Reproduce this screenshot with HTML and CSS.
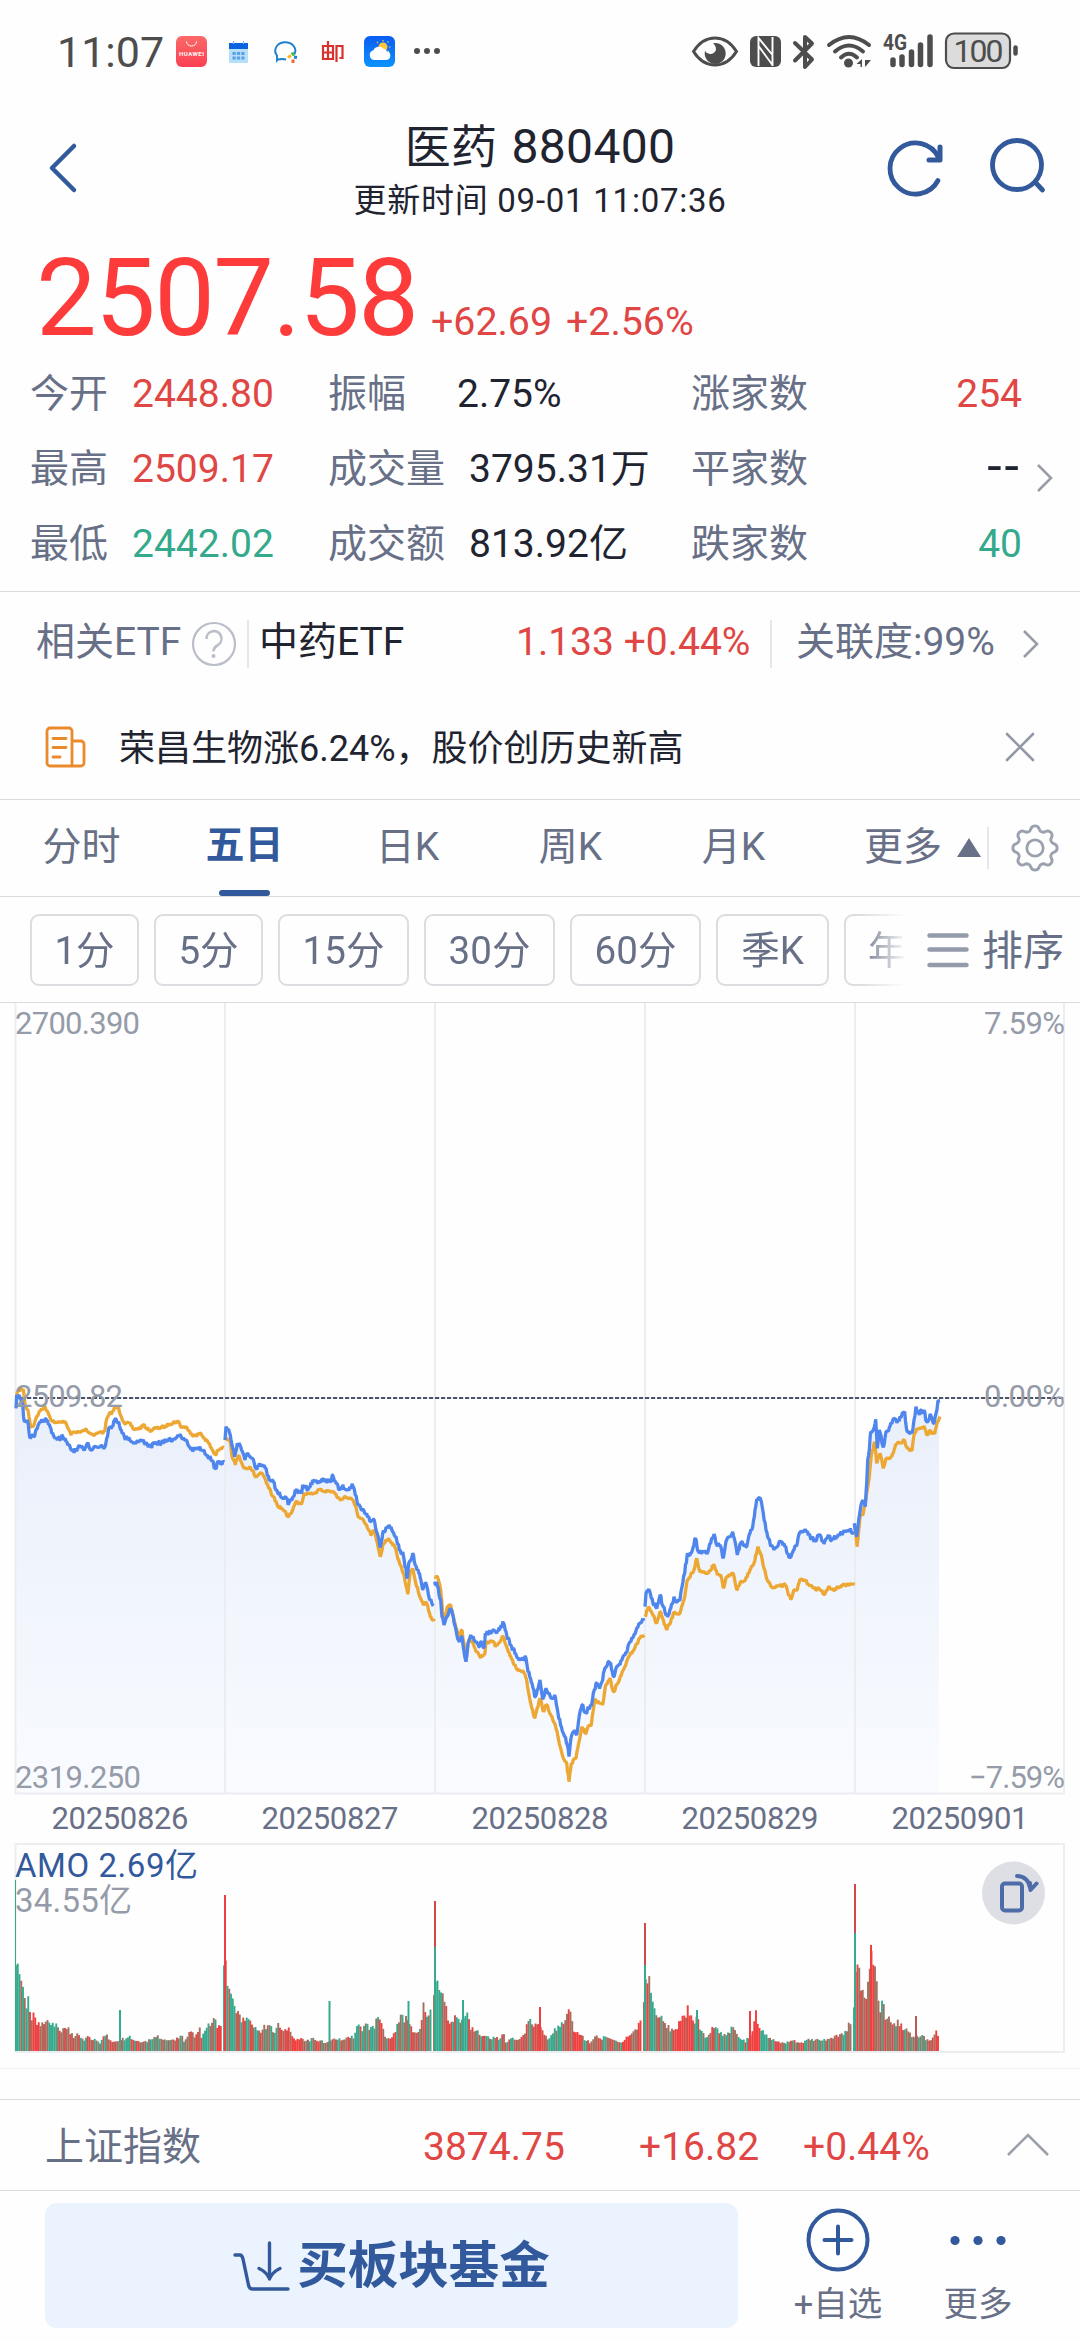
FILE: index.html
```html
<!DOCTYPE html>
<html lang="zh-CN">
<head>
<meta charset="utf-8">
<title>医药 880400</title>
<link rel="stylesheet" href="styles.css">
</head>
<body>
<div class="app">
  <div class="status">
    <span class="clock">11:07</span>
    <svg class="status-left" width="270" height="40" viewBox="172 32 270 40">
      <defs>
        <linearGradient id="hw" x1="0" y1="0" x2="0" y2="1"><stop offset="0" stop-color="#fb6a68"/><stop offset="1" stop-color="#fb3f52"/></linearGradient>
        <linearGradient id="sky" x1="0" y1="0" x2="0" y2="1"><stop offset="0" stop-color="#0a5cf5"/><stop offset="1" stop-color="#0b93ff"/></linearGradient>
      </defs>
      <rect x="176" y="36" width="31" height="31" rx="6" fill="url(#hw)"/>
      <path d="M186.500 41.500a5 4.500 0 0 0 10 0" fill="none" stroke="#fff" stroke-width="1"/>
      <text x="191.500" y="55.500" class="hw-text" textLength="25">HUAWEI</text>
      <rect x="229" y="43" width="19" height="20" rx="1" fill="#b5e0fb"/>
      <rect x="229" y="43" width="19" height="6" fill="#0b62e0"/>
      <path d="M233.500 41v3M243.500 41v3" stroke="#7fb6f5" stroke-width="1.200"/>
      <path d="M232.500 53.500h12M232.500 58h12" stroke="#5d9fe3" stroke-width="3" stroke-dasharray="3.200 1.200"/>
      <path d="M279.500 59.500l-1.500 2v-5a10 8.500 0 1 1 17.500-1.500M279 60.500q4-1 8 0" fill="none" stroke="#1d7fcd" stroke-width="1.900" transform="translate(-1 -1)"/>
      <path d="M288 57.500l3-2" stroke="#f6b51e" stroke-width="3"/><path d="M292 52.500l2 3" stroke="#45b649" stroke-width="3"/><path d="M294 57l3 .5" stroke="#1d7fcd" stroke-width="3"/><path d="M293 63v-3.500" stroke="#ea6a3a" stroke-width="3"/>
      <path d="M323 46h10v13h-10zM323 52.500h10M328 41v18M336.500 62v-16h6v12h-3" fill="none" stroke="#d8322f" stroke-width="2.200"/>
      <rect x="364" y="36" width="31" height="31" rx="6" fill="url(#sky)"/>
      <circle cx="383" cy="47" r="4.500" fill="#ffc736"/>
      <path d="M383 40v1.500M377 42l1 1M388.500 41.500l-1 1M390.500 47h-1.500M389 52l-1-1" stroke="#ffc736" stroke-width="1.200"/>
      <path d="M374 60a5 5 0 0 1-.5-9.800a6 6 0 0 1 10-1.500a4.500 4.500 0 0 1 3.500 2.500a4.500 4.500 0 0 1-.5 8.800z" fill="#fff"/>
      <circle cx="417" cy="51" r="3" fill="#4d4d4d"/><circle cx="427" cy="51" r="3" fill="#4d4d4d"/><circle cx="437" cy="51" r="3" fill="#4d4d4d"/>
    </svg>
    <svg class="status-right" width="330" height="40" viewBox="690 32 330 40" fill="none" stroke="#4d4d4d">
      <path d="M693.500 51.500Q702 38 715 38T736.500 51.500Q728 65 715 65T693.500 51.500Z" stroke-width="3"/>
      <path d="M715 43a10.500 10.500 0 1 1-10 8a6 6 0 0 0 11-1.500q0-4-3-6.300z" fill="#4d4d4d" stroke="none"/>
      <rect x="750" y="36" width="31" height="31" rx="6" fill="#4d4d4d" stroke="none"/>
      <path d="M758.500 66V38L772.500 55V66M758.500 46L772.500 65M772.500 37v17" stroke="#fff" stroke-width="1.900"/>
      <path d="M795 43l17 16.500-7 7.500V37l7 6.500-17 17" stroke-width="4" stroke-linecap="round" stroke-linejoin="round"/>
      <path d="M829 45q20-16 40 0M835 51.500q14-12 28 0M841 57.500q8-7.500 16 0" stroke-width="4" stroke-linecap="round"/>
      <circle cx="848.500" cy="63" r="4.500" fill="#4d4d4d" stroke="none"/>
      <path d="M862 59v8h-1.500v-3h-4zM865 67v-7h6l-5 6z" fill="#4d4d4d" stroke="none"/>
      <text x="883" y="50" class="net" textLength="24" lengthAdjust="spacingAndGlyphs">4G</text>
      <path d="M893 60v4.500M902 57v7.500M911.500 52v12.500M920.500 45v19.500M930 37v27.500" stroke-width="5.500" stroke-linecap="round"/>
      <rect x="946" y="33.500" width="64" height="34.500" rx="8" fill="#dcdcdc" stroke-width="2.200"/>
      <path d="M1015.500 47.500v6" stroke-width="4.500" stroke-linecap="round"/>
      <text x="978.500" y="61.500" class="batt" textLength="50">100</text>
    </svg>
  </div>

  <header class="head">
    <svg class="back" width="30" height="54" viewBox="0 0 30 54"><path d="M27 5L5 27L27 49" fill="none" stroke="#32599b" stroke-width="4.500" stroke-linecap="round" stroke-linejoin="round"/></svg>
    <div class="title">
      <h1><span class="zh">医药</span> 880400</h1>
      <p>更新时间 09-01 11:07:36</p>
    </div>
    <svg class="head-icons" width="164" height="64" viewBox="886 136 164 64" fill="none" stroke="#32599b" stroke-width="4.800">
      <path d="M938 180.500a25.500 25.500 0 1 1 .5-23" stroke-linecap="round"/>
      <path d="M940 147v13h-11" stroke-width="5" stroke-linecap="round" stroke-linejoin="round"/>
      <circle cx="1017" cy="165" r="24.500"/><path d="M1035 182l7.500 8" stroke-linecap="round"/>
    </svg>
  </header>

  <section class="quote">
    <strong>2507.58</strong><span class="chg">+62.69</span><span class="pct">+2.56%</span>
  </section>

  <section class="stats">
    <div class="grid">
      <span>今开</span><b class="up">2448.80</b><span>振幅</span><b>2.75%</b><span>涨家数</span><b class="up r">254</b>
      <span>最高</span><b class="up">2509.17</b><span>成交量</span><b class="v">3795.31万</b><span>平家数</span><b class="r dash">--</b>
      <span>最低</span><b class="down">2442.02</b><span>成交额</span><b class="v">813.92亿</b><span>跌家数</span><b class="down r">40</b>
    </div>
    <svg class="chev" width="18" height="30" viewBox="0 0 18 30"><path d="M2 2l13 13-13 13" fill="none" stroke="#999da6" stroke-width="2.600"/></svg>
  </section>

  <section class="etf">
    <span class="lbl">相关ETF</span>
    <svg class="help" width="46" height="46" viewBox="0 0 46 46"><circle cx="23" cy="23" r="21" fill="none" stroke="#b9bec8" stroke-width="2.200"/><path d="M15.500 18a7.500 7.500 0 1 1 11.500 6q-4.500 2.500-4.500 6.500" fill="none" stroke="#b9bec8" stroke-width="2.600"/><circle cx="22.500" cy="35" r="2" fill="#b9bec8"/></svg>
    <i class="sep"></i>
    <span class="name">中药ETF</span>
    <span class="val">1.133 +0.44%</span>
    <i class="sep"></i>
    <span class="rel">关联度:99%</span>
    <svg class="chev" width="18" height="30" viewBox="0 0 18 30"><path d="M2 2l13 13-13 13" fill="none" stroke="#999da6" stroke-width="2.600"/></svg>
  </section>

  <section class="news">
    <svg width="42" height="42" viewBox="0 0 42 42" fill="none" stroke="#ea8a2c" stroke-width="2.800" stroke-linecap="round" stroke-linejoin="round"><path d="M27 40H5a3 3 0 0 1-3-3V5a3 3 0 0 1 3-3h19a3 3 0 0 1 3 3zM27 15h9a3 3 0 0 1 3 3v19a3 3 0 0 1-3 3h-9M8 12.500h13M8 21.500h13M8 31h7"/></svg>
    <span>荣昌生物涨6.24%，股价创历史新高</span>
    <svg width="30" height="30" viewBox="0 0 30 30"><path d="M2 2l26 26M28 2L2 28" stroke="#9398a6" stroke-width="2.600" stroke-linecap="round"/></svg>
  </section>

  <nav class="tabs">
    <a>分时</a><a class="on">五日</a><a>日K</a><a>周K</a><a>月K</a>
    <span class="more">更多</span>
    <svg class="tri" width="24" height="20" viewBox="0 0 24 20"><path d="M12 0L24 19H0z" fill="#687087"/></svg>
    <i class="sep"></i>
    <svg class="gear" width="50" height="50" viewBox="-25 -25 50 50" fill="none" stroke="#9ba1af" stroke-width="2.800"><circle r="8.200"/><path transform="scale(1.030)" d="M18.500-4.100A4.300 4.300 0 0 1 18.500 4.100A4 4 0 0 0 16 10.200A4.300 4.300 0 0 1 10.200 16A4 4 0 0 0 4.100 18.500A4.300 4.300 0 0 1-4.100 18.500A4 4 0 0 0-10.200 16A4.300 4.300 0 0 1-16 10.200A4 4 0 0 0-18.500 4.100A4.300 4.300 0 0 1-18.500-4.100A4 4 0 0 0-16-10.200A4.300 4.300 0 0 1-10.200-16A4 4 0 0 0-4.100-18.500A4.300 4.300 0 0 1 4.100-18.500A4 4 0 0 0 10.200-16A4.300 4.300 0 0 1 16-10.200A4 4 0 0 0 18.500-4.100Z"/></svg>
  </nav>

  <div class="periods">
    <div class="pills">
      <span class="w1">1分</span><span class="w1">5分</span><span class="w2">15分</span><span class="w2">30分</span><span class="w2">60分</span><span class="w3">季K</span><span class="w4">年</span>
    </div>
    <svg width="42" height="36" viewBox="0 0 42 36"><path d="M2.500 3.500h37M2.500 17.500h37M2.500 33h37" stroke="#949bab" stroke-width="4.500" stroke-linecap="round"/></svg>
    <span class="sort">排序</span>
  </div>

  <section class="charts">
    <svg id="chart" width="1080" height="1065" viewBox="0 1003 1080 1065">
      <defs><linearGradient id="area" gradientUnits="userSpaceOnUse" x1="0" y1="1400" x2="0" y2="1793"><stop offset="0" stop-color="#e9effa"/><stop offset="1" stop-color="#f9fbff"/></linearGradient></defs>
      <g id="areas"></g>
      <path class="frame" d="M15.500 1003V1793.500M225 1003V1793.500M435 1003V1793.500M645 1003V1793.500M855 1003V1793.500M1064 1003V1793.500M15 1793.500H1065"/>
      <path class="frame" d="M15.500 1844H1064V2052H15.500Z"/>
      <path d="M15 1398H1065" stroke="#4a5468" stroke-width="1.800" stroke-dasharray="4.200 1.800"/>
      <g id="lines"></g>
      <g id="bars"></g>
      <g class="axis">
        <text x="15" y="1034" textLength="125">2700.390</text>
        <text x="1065" y="1034" text-anchor="end" textLength="81">7.59%</text>
        <text x="15" y="1407" textLength="108">2509.82</text>
        <text x="1065" y="1407" text-anchor="end" textLength="81">0.00%</text>
        <text x="15" y="1788" textLength="126">2319.250</text>
        <text x="1065" y="1788" text-anchor="end" textLength="96">−7.59%</text>
      </g>
      <g class="dates">
        <text x="120" y="1829" textLength="137">20250826</text><text x="330" y="1829" textLength="137">20250827</text><text x="540" y="1829" textLength="137">20250828</text><text x="750" y="1829" textLength="137">20250829</text><text x="960" y="1829" textLength="137">20250901</text>
      </g>
      <text class="amo" x="15" y="1877" textLength="183">AMO 2.69亿</text>
      <text class="amomax" x="15" y="1912" textLength="117">34.55亿</text>
      <circle cx="1013.500" cy="1893" r="31.500" fill="#dedfe5"/>
      <g fill="none" stroke="#4d6ca8" stroke-width="4" stroke-linecap="round" stroke-linejoin="round"><rect x="1002" y="1883.500" width="20" height="27" rx="3"/><path d="M1017 1876q11 0 13.500 13M1030 1883l.5 7 6-6.500"/></g>
    </svg>
  </section>

  <section class="index">
    <span class="iname">上证指数</span><span class="i1">3874.75</span><span class="i2">+16.82</span><span class="i3">+0.44%</span>
    <svg width="44" height="26" viewBox="0 0 44 26"><path d="M2 23L22 3L42 23" fill="none" stroke="#9ba0ab" stroke-width="2.600"/></svg>
  </section>

  <footer class="foot">
    <button class="buy">
      <svg width="58" height="50" viewBox="0 0 58 50" fill="none" stroke="#32599b" stroke-width="3.400" stroke-linecap="round" stroke-linejoin="round"><path d="M2 14h5q2 0 3 4l5.500 26q.8 4 4 4H55"/><path d="M36.500 2v36M26 27.500q7 3 10.500 10q3.500-7 10.500-10"/></svg>
      <span>买板块基金</span>
    </button>
    <div class="act"><svg width="66" height="66" viewBox="0 0 66 66" fill="none" stroke="#32599b" stroke-width="4"><circle cx="33" cy="33" r="29.500"/><path d="M19.500 33h27M33 19.500v27" stroke-linecap="round"/></svg><span>+自选</span></div>
    <div class="act last"><svg width="66" height="66" viewBox="0 0 66 66" fill="#32599b"><circle cx="10" cy="33.500" r="4.600"/><circle cx="33" cy="33.500" r="4.600"/><circle cx="56" cy="33.500" r="4.600"/></svg><span>更多</span></div>
  </footer>
</div>
<script src="chart.js"></script>
</body>
</html>
```
FILE: styles.css
```css
* { box-sizing: border-box; }
body { margin: 0; background: #fefefe; font-family: Roboto, "Noto Sans CJK SC", sans-serif; color: #1f2430; }
.app { width: 1080px; height: 2340px; overflow: hidden; display: flex; flex-direction: column; background: #fefefe; }
.app > * { flex: none; }
svg { display: block; flex: none; overflow: visible; }
.sep { width: 2px; background: #e6e7ea; flex: none; }

.status { height: 104px; display: flex; align-items: flex-start; padding-left: 57px; }
.clock { font-size: 43px; line-height: 44px; padding-top: 30px; width: 115px; color: #4d4d4d; }
.status svg { margin-top: 32px; }
.status-right { margin-left: 248px; }
.hw-text { font-size: 6px; font-weight: 700; fill: #fff; text-anchor: middle; }
.net { font-size: 22px; font-weight: 700; fill: #4d4d4d; stroke: none; }
.batt { font-size: 32px; fill: #4d4d4d; stroke: none; text-anchor: middle; }

.head { height: 136px; display: grid; grid-template-columns: 194px 1fr 194px; padding-top: 14px; }
.back { margin: 23px 0 0 47px; }
.title { text-align: center; }
.title h1 { margin: -1px 0 0; font-size: 48px; font-weight: 400; line-height: 60px; letter-spacing: .3px; word-spacing: 2px; }
.title .zh { font-size: 46px; }
.title p { margin: 4px 0 0; font-size: 33px; line-height: 40px; letter-spacing: .75px; }
.head-icons { margin-top: 18px; }

.quote { height: 116px; display: flex; align-items: baseline; padding-left: 36px; color: #e04644; }
.quote strong { font-size: 108px; line-height: 116px; font-weight: 400; color: #fe3b3b; width: 395px; letter-spacing: -1.600px; }
.quote span { font-size: 39.300px; }
.quote .chg { width: 135px; }

.stats { height: 236px; display: flex; align-items: center; border-bottom: 1px solid #dcdcde; }
.grid { display: grid; grid-template-columns: 102px 196px 129px 234px 130px 201px; grid-auto-rows: 75px; padding-left: 30px; margin-bottom: 8px; font-size: 39px; line-height: 75px; color: #687087; }
.grid b { font-weight: 400; color: #1f2430; white-space: nowrap; }
.grid span { white-space: nowrap; }
.grid .v { padding-left: 12px; }
.grid .up { color: #e04644; }
.grid .down { color: #35a98c; }
.grid .r { text-align: right; }
.grid .dash { font-size: 52px; letter-spacing: 3px; line-height: 70px; }
.stats .chev { margin: 9px 0 0 14px; }

.etf { height: 103px; display: flex; align-items: center; font-size: 39px; line-height: 60px; }
.etf .sep { height: 48px; }
.etf span { padding-bottom: 3px; white-space: nowrap; }
.etf .lbl { width: 191px; padding-left: 36px; color: #687087; }
.etf .help { margin-right: 10px; }
.etf .name { width: 267px; padding-left: 10px; }
.etf .val { width: 254px; color: #e04644; }
.etf .rel { width: 249px; padding-left: 24px; color: #687087; margin-right: 1px; }

.news { height: 105px; display: flex; align-items: center; padding: 0 45px; border-bottom: 1px solid #dcdcde; }
.news span { flex: 1; padding: 4px 0 0 32px; font-size: 36px; line-height: 60px; }

.tabs { height: 97px; display: flex; align-items: center; border-bottom: 1px solid #dcdcde; font-size: 39px; color: #687087; }
.tabs a { width: 163px; height: 96px; line-height: 95px; text-align: center; }
.tabs .on { color: #32599b; font-weight: 700; display: flex; flex-direction: column; align-items: center; line-height: 90px; }
.tabs .on::after { content: ""; width: 51px; height: 6px; border-radius: 3px; background: #32599b; }
.tabs .more { width: 93px; margin-left: 49px; height: 96px; line-height: 95px; }
.tabs .sep { height: 42px; margin: 0 21px 0 6px; }

.periods { height: 106px; display: flex; align-items: center; border-bottom: 1px solid #dcdcde; color: #687087; }
.pills { width: 912px; margin-right: 15px; overflow: hidden; display: flex; gap: 15px; padding-left: 30px; mask-image: linear-gradient(90deg, #000 860px, transparent 906px); }
.pills span { flex: none; height: 72px; border: 2px solid #dcdde1; border-radius: 9px; font-size: 38.500px; line-height: 69px; text-align: center; }
.pills .w1 { width: 109px; }
.pills .w2 { width: 131px; }
.pills .w3 { width: 113px; }
.pills .w4 { width: 113px; text-align: left; padding-left: 22px; }
.sort { font-size: 41px; line-height: 60px; padding: 3px 0 0 13px; }

.charts { height: 1066px; border-bottom: 1px solid #f0f0f2; }
.frame { fill: none; stroke: #ecedf0; stroke-width: 2; }
.axis text { font-size: 31px; fill: #959ba8; }
.dates text { font-size: 31px; fill: #687087; text-anchor: middle; }
.amo { font-size: 33px; fill: #32599b; }
.amomax { font-size: 33px; fill: #959ba8; }
.line { fill: none; stroke-width: 3.300; stroke-linejoin: bevel; }
.avg { stroke: #eda733; }
.price { stroke: #4f86ee; }

.index { height: 92px; margin-top: 30px; border-top: 1px solid #dcdcde; border-bottom: 1px solid #dcdcde; display: flex; align-items: center; font-size: 39px; line-height: 60px; color: #e04644; padding-left: 45px; }
.index span { padding-top: 4px; }
.index .iname { color: #687087; width: 378px; }
.index .i1 { width: 216px; }
.index .i2 { width: 164px; }
.index .i3 { width: 203px; }

.foot { flex: 1; display: flex; padding: 12px 0 0 45px; }
.buy { width: 693px; height: 125px; border: 0; border-radius: 12px; background: #ebf3fe; display: flex; align-items: center; justify-content: center; gap: 6px; color: #32599b; font: 700 50.500px/60px Roboto, "Noto Sans CJK SC", sans-serif; padding: 0; }
.act { width: 140px; margin-left: 30px; display: flex; flex-direction: column; align-items: center; padding-top: 4px; font-size: 34.500px; line-height: 48px; color: #687087; }
.act span { padding-top: 7px; }
.act.last { margin-left: 0; }
```
FILE: chart.js
```js
const NS = 'http://www.w3.org/2000/svg';

// Five trading sessions; x,y pairs are in thirds of a pixel from the session's origin.
const sessions = [
  { ox: 0, oy: 0,
    price: '48,145 50,105 62,115 68,130 72,180 82,180 90,235 98,222 104,228 112,205 122,188 130,180 140,182 150,200 160,225 172,240 188,228 198,245 212,268 230,273 240,260 250,268 264,248 274,270 284,260 294,262 304,255 314,262 320,235 326,205 336,198 344,180 356,185 364,210 374,235 386,232 396,247 410,245 428,242 440,250 450,260 470,250 490,248 500,240 520,238 534,225 545,235 556,240 570,262 580,270 592,262 610,270 622,285 632,295 646,325 656,306 672,306',
    avg: '50,105 56,90 70,88 76,140 84,150 92,200 102,195 110,170 122,150 132,140 142,152 154,180 170,190 190,182 200,195 212,222 226,215 240,218 256,208 278,224 296,218 314,215 318,185 326,165 338,155 344,142 356,145 364,170 376,192 388,190 402,208 420,205 430,195 450,212 470,204 490,202 510,190 534,184 545,202 558,200 572,222 586,225 600,220 614,235 626,250 646,285 656,270 672,262' },
  { ox: 0, oy: 0,
    price: '675,240 678,200 688,215 696,255 704,290 712,250 722,260 735,300 742,280 752,292 760,298 768,325 778,310 790,318 800,335 808,362 820,365 828,390 840,405 854,412 866,430 878,412 888,392 905,400 908,375 925,385 940,362 960,365 975,360 994,365 998,345 1008,370 1018,390 1030,380 1044,388 1058,378 1066,405 1074,435 1086,450 1100,460 1110,485 1122,478 1132,520 1141,560 1148,520 1158,502 1168,495 1178,515 1188,530 1198,570 1210,585 1222,655 1226,610 1238,580 1246,615 1260,650 1268,690 1278,670 1290,720 1300,738',
    avg: '675,240 690,240 696,290 706,315 716,285 732,325 750,320 768,352 780,340 792,350 806,385 820,410 832,435 850,450 864,470 878,450 888,425 905,430 912,400 940,400 960,390 1000,395 1020,420 1036,410 1060,422 1068,440 1074,470 1092,485 1114,525 1122,510 1134,560 1141,590 1150,550 1166,535 1184,560 1196,600 1210,640 1224,700 1230,640 1238,625 1250,680 1270,735 1278,725 1295,778 1303,776' },
  { ox: 1290, oy: 180,
    price: '14,485 22,498 32,540 36,590 42,615 50,590 62,568 70,590 78,630 86,662 96,650 102,695 108,725 114,670 122,645 134,660 146,680 154,665 162,683 166,640 180,638 194,635 208,630 220,608 230,645 242,675 256,700 262,715 288,715 294,755 306,790 314,830 322,810 330,780 338,838 348,805 358,820 366,835 374,825 384,880 396,930 404,950 412,975 417,1010 422,960 434,930 440,945 446,900 456,855 468,880 474,860 484,858 490,820 498,790 510,800 518,780 522,755 534,725 542,730 550,770 560,740 570,735 582,705 592,690 600,665 610,650 624,620 636,602 642,602',
    avg: '14,470 24,475 32,510 38,575 42,605 52,560 62,555 72,600 86,655 96,630 108,720 116,660 126,665 138,695 150,710 164,705 168,665 190,665 196,680 220,650 232,685 250,730 262,750 284,760 290,780 300,840 314,895 324,860 330,835 340,875 350,855 366,890 376,915 388,970 400,1015 410,1030 417,1085 424,1030 438,1015 446,970 456,920 468,940 474,920 484,915 494,840 518,855 526,800 540,775 550,815 566,785 584,740 600,705 616,680 632,650 643,645' },
  { ox: 1290, oy: 180,
    price: '645,560 648,520 656,508 664,535 680,565 690,525 700,560 712,590 722,565 732,530 742,545 750,540 756,500 764,460 772,400 784,400 796,355 806,395 820,395 834,395 842,370 852,342 860,375 870,375 880,415 890,360 900,350 908,335 914,360 922,405 932,370 950,380 960,340 968,320 975,270 980,238 992,238 1000,280 1008,330 1020,370 1032,390 1046,370 1062,370 1074,400 1080,412 1094,380 1102,370 1108,340 1120,335 1130,335 1144,355 1154,360 1168,345 1182,372 1194,345 1204,362 1220,350 1240,335 1256,330 1272,335',
    avg: '645,590 655,560 664,575 680,610 690,575 700,600 710,630 722,605 730,580 750,578 762,540 772,480 782,465 792,450 800,415 808,450 830,460 842,450 852,432 862,465 872,465 880,505 890,470 902,465 910,460 920,510 932,485 946,480 960,450 972,430 984,380 994,405 1002,445 1012,480 1028,505 1046,495 1066,495 1082,538 1094,510 1102,510 1110,478 1126,482 1150,505 1166,505 1184,523 1198,500 1210,510 1230,500 1250,494 1272,492' },
  { ox: 2100, oy: 0,
    price: '463,490 470,530 476,480 482,440 488,420 496,440 500,370 503,300 508,270 512,215 520,210 527,178 532,265 538,210 550,262 558,215 570,200 580,175 592,185 604,170 614,155 620,210 636,220 642,180 648,140 656,160 672,150 680,185 692,165 702,190 708,160 714,122 720,122',
    avg: '465,500 471,560 480,470 490,460 500,400 508,350 514,285 524,245 530,310 540,280 550,325 560,295 575,290 584,265 594,245 604,250 612,240 622,265 636,272 642,225 650,205 664,205 672,198 680,225 690,212 704,222 712,185 720,170' }
];

// Turnover: x,height pairs (pixels) of the bar envelope, then single spikes.
const volume = [
  '16,90 18,88 20,80 22,70 24,66 26,50 28,53 30,47 32,36 34,42 36,30 44,28 48,30 52,27 56,26 60,20 64,22 68,24 70,20 74,14 78,18 84,12 88,15 94,12 100,8 106,18 110,12 118,9 122,12 130,15 136,10 144,9 150,12 156,16 164,11 172,11 178,14 181,18 184,9 190,20 196,15 199,25 202,14 206,22 210,30 215,36 218,24 222,31',
  '224,90 226,86 228,62 231,55 232,60 235,50 238,38 242,34 246,32 250,34 254,25 258,18 264,26 270,26 275,20 278,30 282,24 288,24 292,18 296,12 302,14 306,10 314,13 322,10 328,9 332,14 340,12 348,14 354,15 358,30 362,20 366,28 372,22 378,34 381,36 384,16 390,12 394,18 400,34 406,33 410,28 414,20 420,22 423,46 425,46 427,34 430,46 432,46',
  '434,65 437,74 440,60 443,68 445,50 448,36 452,30 456,38 462,30 468,42 470,24 476,22 480,18 486,15 492,13 496,14 500,12 504,18 506,9 512,14 518,12 524,16 528,30 530,36 534,25 538,30 543,18 549,12 553,20 558,25 564,32 567,40 570,42 574,20 580,16 586,12 590,8 596,15 602,12 604,18 610,12 620,8 626,14 634,20 641,32',
  '644,50 646,75 649,73 651,55 654,42 658,37 664,30 668,26 674,20 680,30 685,37 688,48 690,35 696,32 697.5,40 700,25 706,14 711,22 714,24 717,25 722,16 728,20 734,25 740,12 746,10 753,22 756,38 760,25 764,18 770,13 778,10 786,8 792,12 800,8 808,12 818,12 826,12 832,14 840,16 846,22 851,32',
  '854,50 856,85 858,90 861,65 866,62 870,84 871.5,106 873,80 875,88 877,62 879,45 883,50 885,33 888,40 892,28 896,30 898,32 904,24 908,22 912,16 920,16 926,13 932,12 936,20 939,17'
];
const RED = '#f03f3e', GREEN = '#37aa8e', BROWN = '#a3705f';
const spikes = [[15.5, 171, GREEN, 1], [120, 41, GREEN], [225, 156, RED], [329.5, 50, GREEN], [408.5, 50, GREEN],
  [435, 150, '#d04a48'], [435, 104, GREEN], [463, 51, GREEN], [540, 44, RED], [645, 128, '#d04a48'], [645, 86, GREEN],
  [697, 41, GREEN], [750, 40, RED], [855, 167, '#d04a48'], [855, 118, GREEN], [871, 106, RED], [916, 35, '#b55a54']];
// Runs where one side dominated.
const solid = [[16, 28, GREEN], [30, 44, RED], [48, 57, GREEN], [205, 216, GREEN], [216, 223, RED], [227, 234, GREEN], [262, 280, GREEN],
  [288, 306, RED], [352, 360, GREEN], [364, 374, GREEN], [379, 386, RED], [426, 434, GREEN], [436, 444, GREEN], [456, 466, GREEN],
  [548, 562, GREEN], [566, 582, RED], [622, 642, RED], [648, 655, GREEN], [676, 692, RED], [752, 760, RED],
  [760, 770, GREEN], [784, 790, GREEN], [866, 878, RED], [884, 890, RED], [935, 940, RED]];

let seed = 7;
const rnd = () => (seed = (seed * 16807) % 2147483647) / 2147483647;
const parse = s => s.split(' ').map(p => p.split(',').map(Number));
const add = (parent, tag, attrs) => {
  const el = document.createElementNS(NS, tag);
  for (const k in attrs) el.setAttribute(k, attrs[k]);
  document.getElementById(parent).appendChild(el);
};
const at = (pts, x) => {
  let i = 1;
  while (i < pts.length - 1 && pts[i][0] < x) i++;
  const [a, b] = [pts[i - 1], pts[i]];
  return a[1] + (b[1] - a[1]) * Math.min(1, Math.max(0, (x - a[0]) / (b[0] - a[0])));
};
const trace = (s, key) => {
  const pts = parse(s[key]), out = [];
  pts.forEach((p, i) => {
    out.push(p);
    const n = pts[i + 1];
    if (!n) return;
    for (let x = p[0] + 2.6; x < n[0] - 1; x += 2.6) {
      out.push([x, at(pts, x) + (rnd() - .5) * (key === 'avg' ? 10 : 15)]);
    }
  });
  return out.map(([x, y]) => [((x + s.ox) / 3).toFixed(1), (1360 + (y + s.oy) / 3).toFixed(1)]);
};

sessions.forEach((s, i) => {
  const avg = trace(s, 'avg'), price = trace(s, 'price');
  const left = 15 + i * 210, right = i === 4 ? 939 : left + 210;
  const path = price.map(p => p.join(' ')).join('L');
  add('areas', 'path', { d: `M${left} 1793V${price[0][1]}L${path}L${right} ${price[price.length - 1][1]}V1793Z`, fill: 'url(#area)' });
  add('lines', 'path', { d: 'M' + avg.map(p => p.join(' ')).join('L'), class: 'line avg' });
  add('lines', 'path', { d: 'M' + path, class: 'line price' });
});

const bar = (x, h, fill, w = 2) => add('bars', 'rect', { x: x - w / 2, y: 2051 - h, width: w, height: h, fill });
volume.forEach(day => {
  const pts = parse(day), end = pts[pts.length - 1][0];
  for (let x = pts[0][0]; x <= end; x += 1.75) {
    const run = solid.find(r => x >= r[0] && x < r[1]), r = rnd();
    const mix = r < .36 ? '#dc4b48' : r < .64 ? GREEN : BROWN;
    bar(x, at(pts, x) * (.82 + rnd() * .26), run && r < .8 ? run[2] : mix, 1.9);
  }
});
spikes.forEach(s => bar(...s));
```
